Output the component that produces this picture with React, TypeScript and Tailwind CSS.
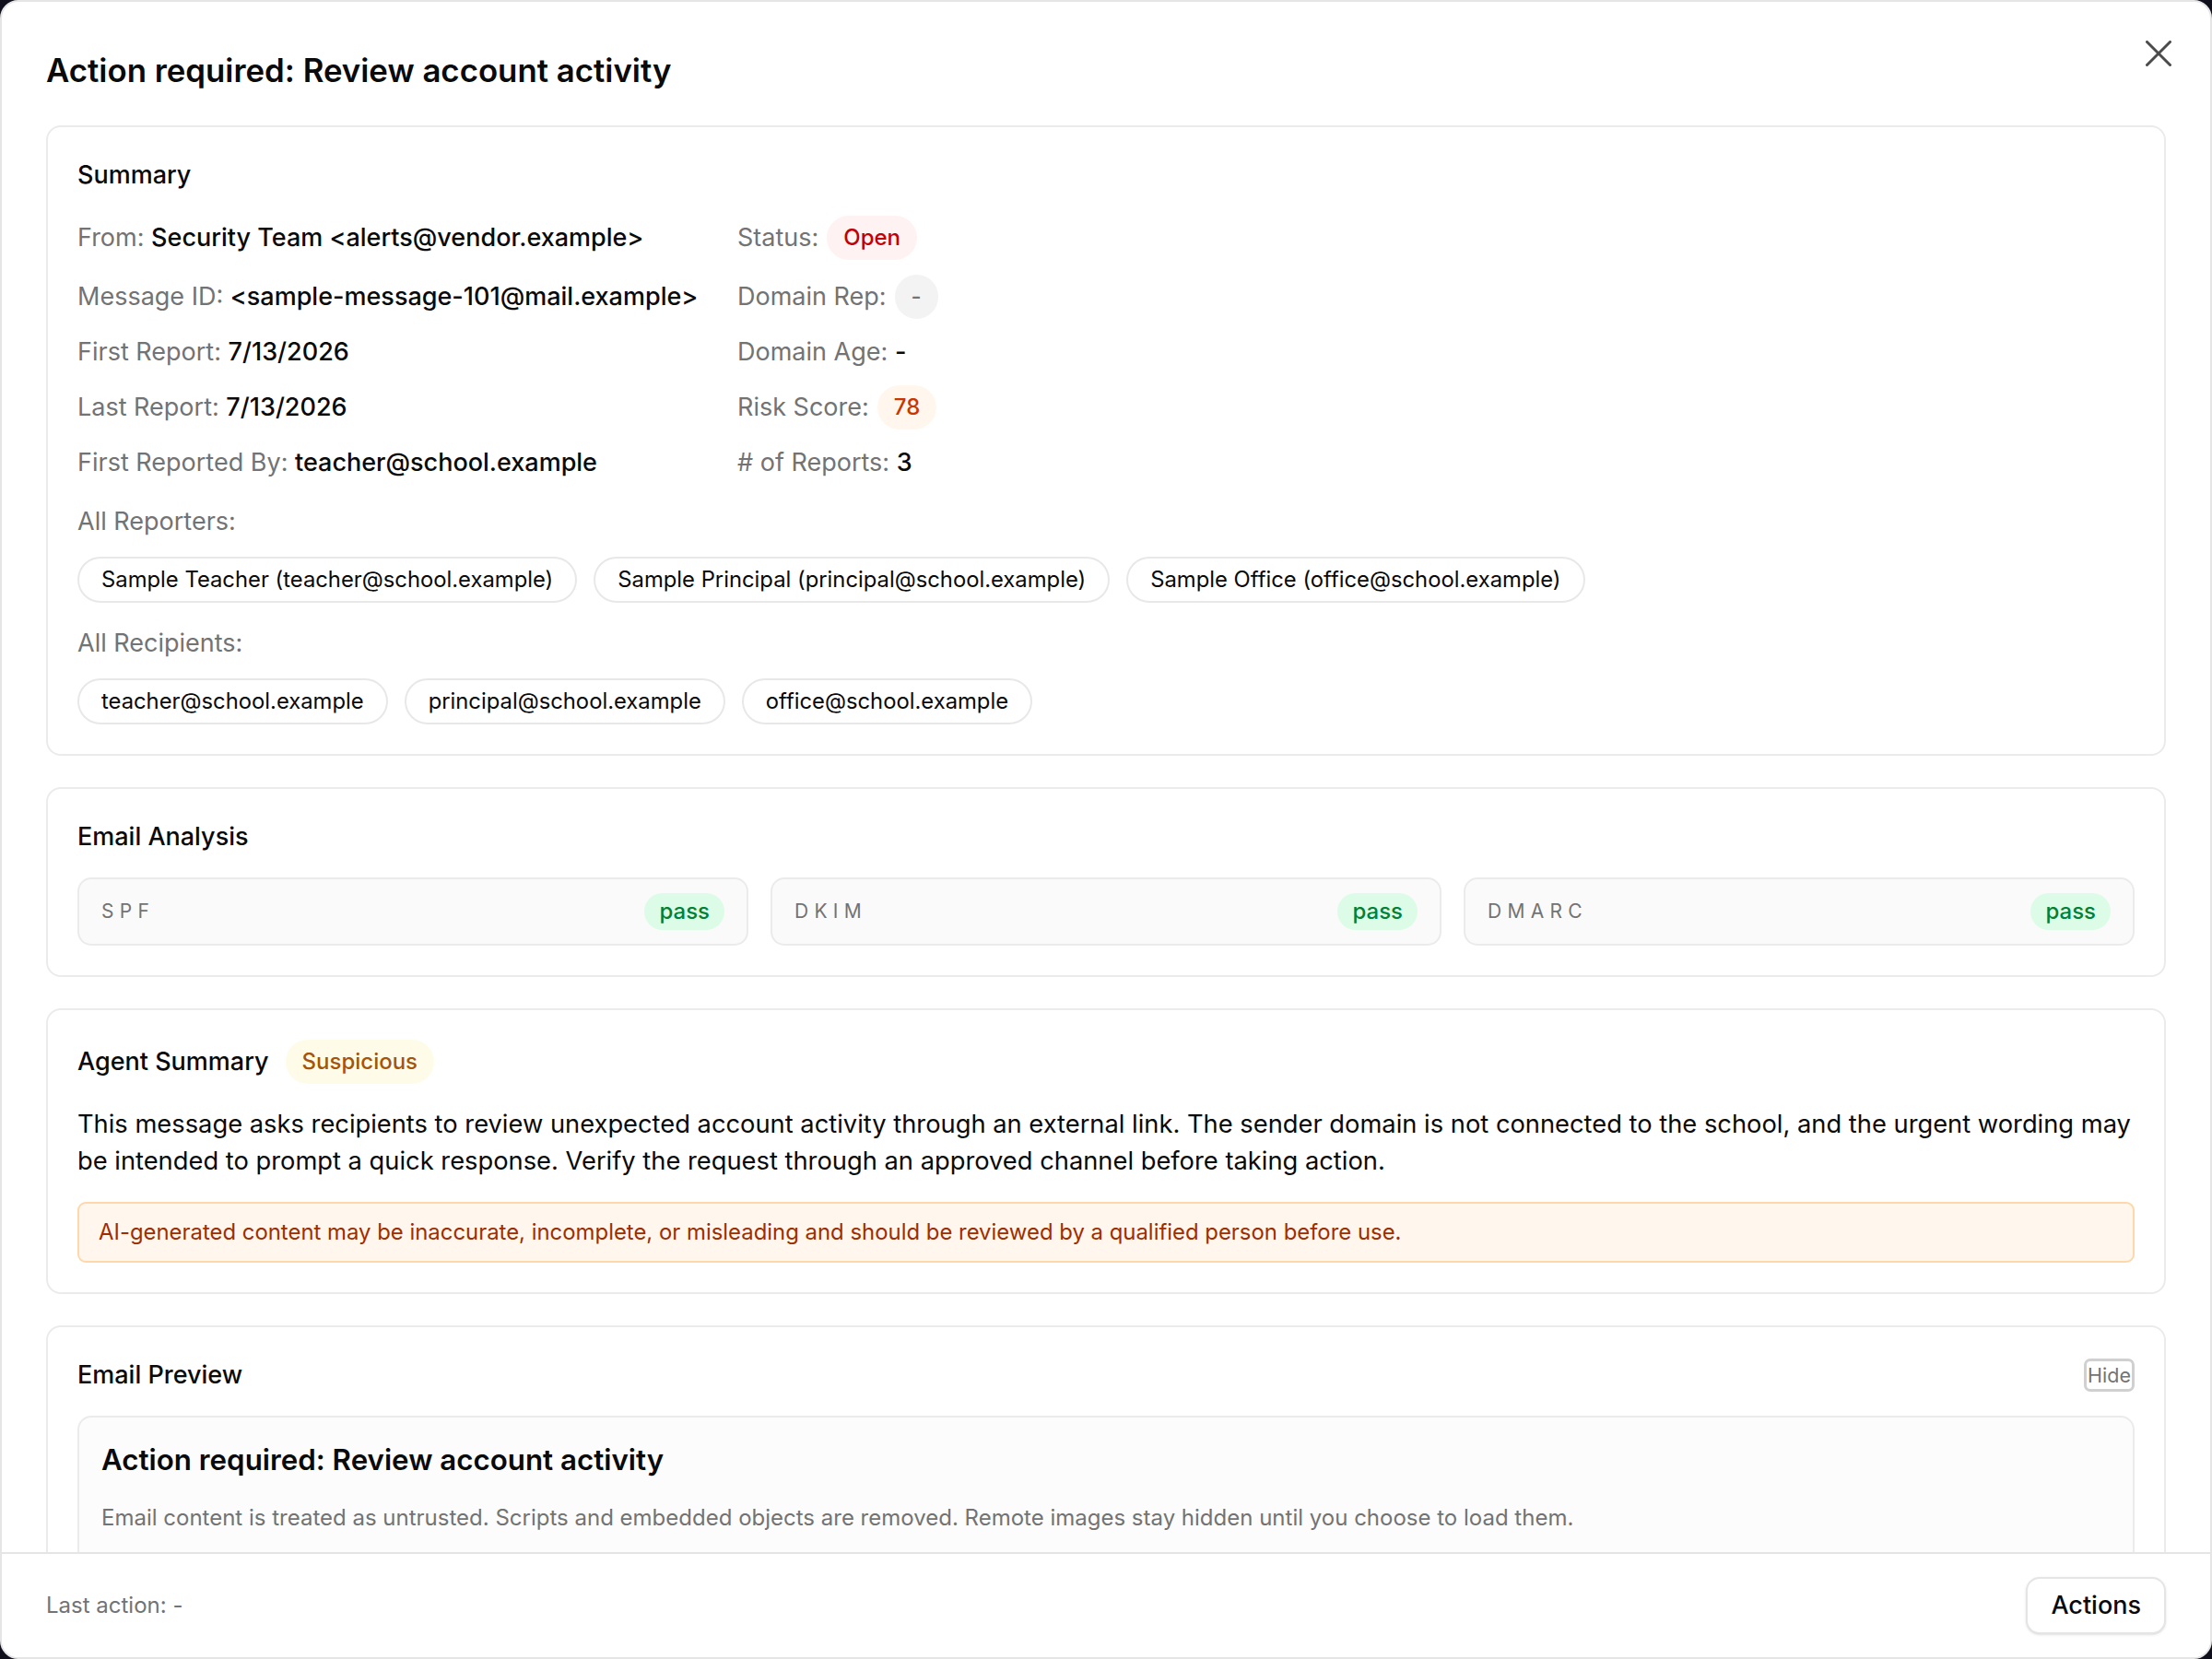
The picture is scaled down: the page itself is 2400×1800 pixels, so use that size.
import React from "react";

const FONT = { fontFamily: 'Inter, "Noto Sans", "Liberation Sans", sans-serif' };

function Card({ children }: { children: React.ReactNode }) {
  return (
    <div className="flex flex-col gap-[24px] rounded-[16px] border-2 border-[#ebebeb] bg-white p-[32px]">
      {children}
    </div>
  );
}

function Heading({ children }: { children: React.ReactNode }) {
  return <h2 className="text-[27px] font-medium leading-[40px] text-[#0a0a0a]">{children}</h2>;
}

function TextCell({ label, value }: { label: string; value: string }) {
  return (
    <div className="flex items-center">
      <span className="text-[27px] leading-[40px]">
        <span className="text-[#737373]">{label}</span>{" "}
        <span className="font-medium text-[#0a0a0a]">{value}</span>
      </span>
    </div>
  );
}

function BadgeCell({ label, value, cls }: { label: string; value: string; cls: string }) {
  return (
    <div className="flex items-center gap-[9px]">
      <span className="text-[27px] leading-[40px] text-[#737373]">{label}</span>
      <span className={"inline-flex h-[48px] items-center rounded-full px-[18px] text-[24px] font-medium " + cls}>
        {value}
      </span>
    </div>
  );
}

function Pill({ children }: { children: React.ReactNode }) {
  return (
    <span className="inline-flex h-[50px] items-center rounded-full border-2 border-[#e8e8e8] px-[24px] text-[23.8px] text-[#0a0a0a]">
      {children}
    </span>
  );
}

function AuthBox({ name }: { name: string }) {
  return (
    <div className="flex h-[74px] items-center justify-between rounded-[15px] border-2 border-[#ebebeb] bg-[#fafafa] px-[24px]">
      <span className="text-[21px] tracking-[0.3em] text-[#737373]">{name}</span>
      <span className="inline-flex h-[40px] items-center rounded-full bg-[#dcfce7] px-[16px] text-[24px] font-medium text-[#008236]">
        pass
      </span>
    </div>
  );
}

export default function App() {
  return (
    <div className="h-[1800px] w-[2400px] bg-[#10101c]" style={FONT}>
      <div className="relative flex h-full w-full flex-col overflow-hidden rounded-[20px] border-2 border-[#e5e5e5] bg-white">
        <button className="absolute right-[42px] top-[42px] h-[28px] w-[28px]" aria-label="Close">
          <svg width="28" height="28" viewBox="0 0 28 28" fill="none">
            <path d="M1.5 1.5L26.5 26.5M26.5 1.5L1.5 26.5" stroke="#4b4b4b" strokeWidth="3" strokeLinecap="round" />
          </svg>
        </button>

        <div className="flex-1 overflow-hidden px-[48px] pt-[48px]">
          <div className="flex flex-col gap-[34px]">
            <h1 className="text-[34.8px] font-semibold leading-[52px] text-[#0a0a0a]">
              Action required: Review account activity
            </h1>

            <Card>
              <Heading>Summary</Heading>
              <div className="grid grid-cols-[684px_auto] gap-x-[32px] gap-y-[16px]">
                <TextCell label="From:" value="Security Team <alerts@vendor.example>" />
                <BadgeCell label="Status:" value="Open" cls="bg-[#fef2f2] text-[#c10007]" />
                <TextCell label="Message ID:" value="<sample-message-101@mail.example>" />
                <BadgeCell label="Domain Rep:" value="-" cls="bg-[#f3f3f3] text-[#737373]" />
                <TextCell label="First Report:" value="7/13/2026" />
                <TextCell label="Domain Age:" value="-" />
                <TextCell label="Last Report:" value="7/13/2026" />
                <BadgeCell label="Risk Score:" value="78" cls="bg-[#fff7ed] text-[#ca3500]" />
                <TextCell label="First Reported By:" value="teacher@school.example" />
                <TextCell label="# of Reports:" value="3" />
              </div>
              <div className="flex flex-col gap-[18px]">
                <span className="text-[27px] leading-[40px] text-[#737373]">All Reporters:</span>
                <div className="flex flex-wrap gap-[18px]">
                  <Pill>Sample Teacher (teacher@school.example)</Pill>
                  <Pill>Sample Principal (principal@school.example)</Pill>
                  <Pill>Sample Office (office@school.example)</Pill>
                </div>
              </div>
              <div className="flex flex-col gap-[18px]">
                <span className="text-[27px] leading-[40px] text-[#737373]">All Recipients:</span>
                <div className="flex flex-wrap gap-[18px]">
                  <Pill>teacher@school.example</Pill>
                  <Pill>principal@school.example</Pill>
                  <Pill>office@school.example</Pill>
                </div>
              </div>
            </Card>

            <Card>
              <Heading>Email Analysis</Heading>
              <div className="grid grid-cols-3 gap-[24px]">
                <AuthBox name="SPF" />
                <AuthBox name="DKIM" />
                <AuthBox name="DMARC" />
              </div>
            </Card>

            <Card>
              <div className="flex items-center gap-[18px]">
                <Heading>Agent Summary</Heading>
                <span className="inline-flex h-[48px] items-center rounded-full bg-[#fefce8] px-[18px] text-[24px] font-medium text-[#a6530b]">
                  Suspicious
                </span>
              </div>
              <p className="text-[27.3px] leading-[40px] text-[#0a0a0a]">
                This message asks recipients to review unexpected account activity through an external link. The sender
                domain is not connected to the school, and the urgent wording may be intended to prompt a quick response.
                Verify the request through an approved channel before taking action.
              </p>
              <div className="rounded-[9px] border-2 border-[#fed7aa] bg-[#fff7ed] px-[21px] py-[13px] text-[23.9px] leading-[36px] text-[#9f2d00]">
                AI-generated content may be inaccurate, incomplete, or misleading and should be reviewed by a qualified
                person before use.
              </div>
            </Card>

            <Card>
              <div className="flex h-[40px] items-center justify-between">
                <Heading>Email Preview</Heading>
                <button className="h-[36px] rounded-[7px] border-[3px] border-[#d0d0d0] px-[1px] text-[21.5px] leading-[28px] text-[#737373]">
                  Hide
                </button>
              </div>
              <div className="min-h-[400px] rounded-[15px] border-2 border-[#ebebeb] bg-[#fcfcfc] px-[24px] pt-[22px]">
                <h3 className="text-[31.3px] font-semibold leading-[48px] text-[#0a0a0a]">
                  Action required: Review account activity
                </h3>
                <p className="mt-[21px] text-[24px] leading-[36px] text-[#737373]">
                  Email content is treated as untrusted. Scripts and embedded objects are removed. Remote images stay
                  hidden until you choose to load them.
                </p>
              </div>
            </Card>
          </div>
        </div>

        <footer className="flex h-[114px] shrink-0 items-center justify-between border-t-2 border-[#e5e5e5] bg-white px-[48px]">
          <span className="text-[24px] text-[#737373]">Last action: -</span>
          <button className="h-[62px] rounded-[15px] border-2 border-[#e5e5e5] bg-white px-[25px] text-[27px] font-medium text-[#0a0a0a] shadow-sm">
            Actions
          </button>
        </footer>
      </div>
    </div>
  );
}
